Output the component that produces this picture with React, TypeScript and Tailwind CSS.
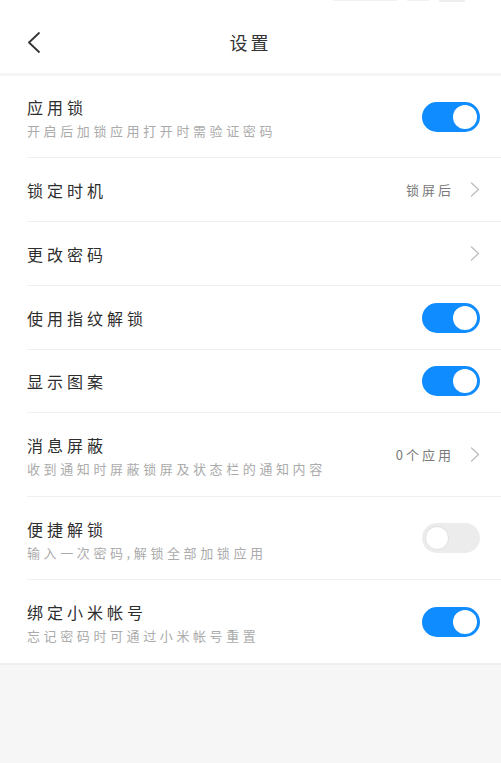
import React from "react";

type Row = {
  title: string;
  sub?: string;
  value?: string;
  chevron?: boolean;
  toggle?: boolean | null;
  h: string;
};

const rows: Row[] = [
  { title: "应用锁", sub: "开启后加锁应用打开时需验证密码", toggle: true, h: "h-[82px]" },
  { title: "锁定时机", value: "锁屏后", chevron: true, h: "h-[64px]" },
  { title: "更改密码", chevron: true, h: "h-[64px]" },
  { title: "使用指纹解锁", toggle: true, h: "h-[64px]" },
  { title: "显示图案", toggle: true, h: "h-[63px]" },
  { title: "消息屏蔽", sub: "收到通知时屏蔽锁屏及状态栏的通知内容", value: "0个应用", chevron: true, h: "h-[84px]" },
  { title: "便捷解锁", sub: "输入一次密码,解锁全部加锁应用", toggle: false, h: "h-[83px]" },
  { title: "绑定小米帐号", sub: "忘记密码时可通过小米帐号重置", toggle: true, h: "h-[83px]" },
];

function Toggle({ on }: { on: boolean }) {
  if (on) {
    return (
      <div className="w-[58px] h-[30px] rounded-full bg-[#0f8cff] flex items-center justify-end pr-[3px] shrink-0">
        <div className="w-[24px] h-[24px] rounded-full bg-white" />
      </div>
    );
  }
  return (
    <div className="w-[58px] h-[30px] rounded-full bg-[#ececec] flex items-center justify-start pl-[3px] shrink-0">
      <div className="w-[24px] h-[24px] rounded-full bg-white border border-[#e0e0e0]" />
    </div>
  );
}

function Chevron() {
  return (
    <svg width="10" height="15" viewBox="0 0 10 15" className="shrink-0">
      <polyline points="1.5,1 8.5,7.5 1.5,14" fill="none" stroke="#bdbdbd" strokeWidth="1.3" strokeLinecap="round" strokeLinejoin="round" />
    </svg>
  );
}

export default function App() {
  return (
    <div className="min-h-screen w-full bg-[#f6f6f6] font-['Noto_Sans_CJK_SC','Noto_Sans',sans-serif]">
      <div className="bg-white">
        {/* header */}
        <div className="flex flex-col">
          <div className="h-[2px] flex justify-end pr-[36px] gap-[10px]">
            <div className="w-[64px] h-[1px] bg-[#f2f2f2]" />
            <div className="w-[22px] h-[1px] bg-[#f2f2f2]" />
            <div className="w-[26px] h-[2px] bg-[#eeeeee]" />
          </div>
          <div className="h-[71px] pt-[9px] flex items-center px-[27px]">
            <svg width="13" height="21" viewBox="0 0 13 21" className="shrink-0">
              <polyline points="12,1 2,10.5 12,20" fill="none" stroke="#333" strokeWidth="1.8" strokeLinecap="round" strokeLinejoin="round" />
            </svg>
            <div className="flex-1 text-center text-[18px] tracking-[3px] text-[#333] pr-[13px]">设置</div>
          </div>
          <div className="h-[3px] bg-[#f5f5f5]" />
        </div>

        {/* rows */}
        {rows.map((r, i) => (
          <div key={i} className="pl-[27px]">
            <div
              className={`${r.h} flex items-center justify-between pr-[21px] ${
                i < rows.length - 1 ? "border-b border-[#efefef]" : ""
              }`}
            >
              <div className={`flex flex-col ${r.sub ? "pt-[3px]" : ""}`}>
                <div className="text-[16px] leading-[22px] tracking-[4px] text-[#2e2e2e]">{r.title}</div>
                {r.sub && (
                  <div className="mt-[4px] text-[13px] leading-[18px] tracking-[3.6px] text-[#ababab]">{r.sub}</div>
                )}
              </div>
              <div className="flex items-center gap-4">
                {r.value && <span className="text-[13px] tracking-[3px] text-[#7a7a7a]">{r.value}</span>}
                {r.chevron && <Chevron />}
                {r.toggle !== undefined && r.toggle !== null && <Toggle on={r.toggle} />}
              </div>
            </div>
          </div>
        ))}
      </div>
      <div className="h-[2px] bg-[#efefef]" />
    </div>
  );
}
